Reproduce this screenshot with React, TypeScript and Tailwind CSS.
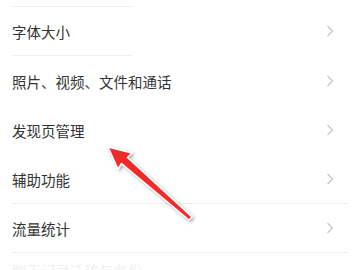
import React from "react";

const Chevron = () => (
  <svg width="8" height="12" viewBox="0 0 8 12" className="shrink-0">
    <path d="M1.5 1 L6.5 6 L1.5 11" fill="none" stroke="#c4c4c4" strokeWidth="1.2" />
  </svg>
);

const Row = ({ label, h }: { label: string; h: string }) => (
  <div className={`flex items-center justify-between pl-3 pr-[26px] ${h}`}>
    <span className="text-[14.5px] text-[#333] pt-[2px]">{label}</span>
    <Chevron />
  </div>
);

export default function App() {
  return (
    <div
      className="relative w-[360px] h-[270px] overflow-hidden bg-white"
      style={{ fontFamily: '"Noto Sans CJK SC", "Noto Sans", sans-serif' }}
    >
      <div className="h-[6px]" />
      <div className="ml-3 w-[121px] h-px bg-[#efefef]" />
      <Row label="字体大小" h="h-[48px]" />
      <div className="ml-3 w-[121px] h-px bg-[#efefef]" />
      <Row label="照片、视频、文件和通话" h="h-[49.5px]" />
      <Row label="发现页管理" h="h-[49.5px]" />
      <Row label="辅助功能" h="h-[48px]" />
      <div className="ml-3 mr-3 h-px bg-[#ececec]" />
      <Row label="流量统计" h="h-[48px]" />
      <div className="ml-3 mr-3 h-px bg-[#ececec]" />
      <div className="flex items-start pl-3 h-[17px] overflow-hidden">
        <span className="text-[14.5px] leading-none text-[#f0f0f0] pt-[11px]">聊天记录迁移与备份</span>
      </div>
      <svg className="absolute left-0 top-0" width="360" height="270" viewBox="0 0 360 270">
        <defs>
          <filter id="sh" x="-20%" y="-20%" width="140%" height="140%">
            <feDropShadow dx="1.5" dy="1.5" stdDeviation="1.5" floodColor="#000" floodOpacity="0.35" />
          </filter>
        </defs>
        <polygon
          points="108,147 132,153 127.5,157.5 192,217 189,220 121.5,163.5 118,169"
          fill="#f12b2b"
          stroke="#ffffff"
          strokeWidth="1.5"
          strokeLinejoin="round"
          filter="url(#sh)"
        />
      </svg>
    </div>
  );
}
